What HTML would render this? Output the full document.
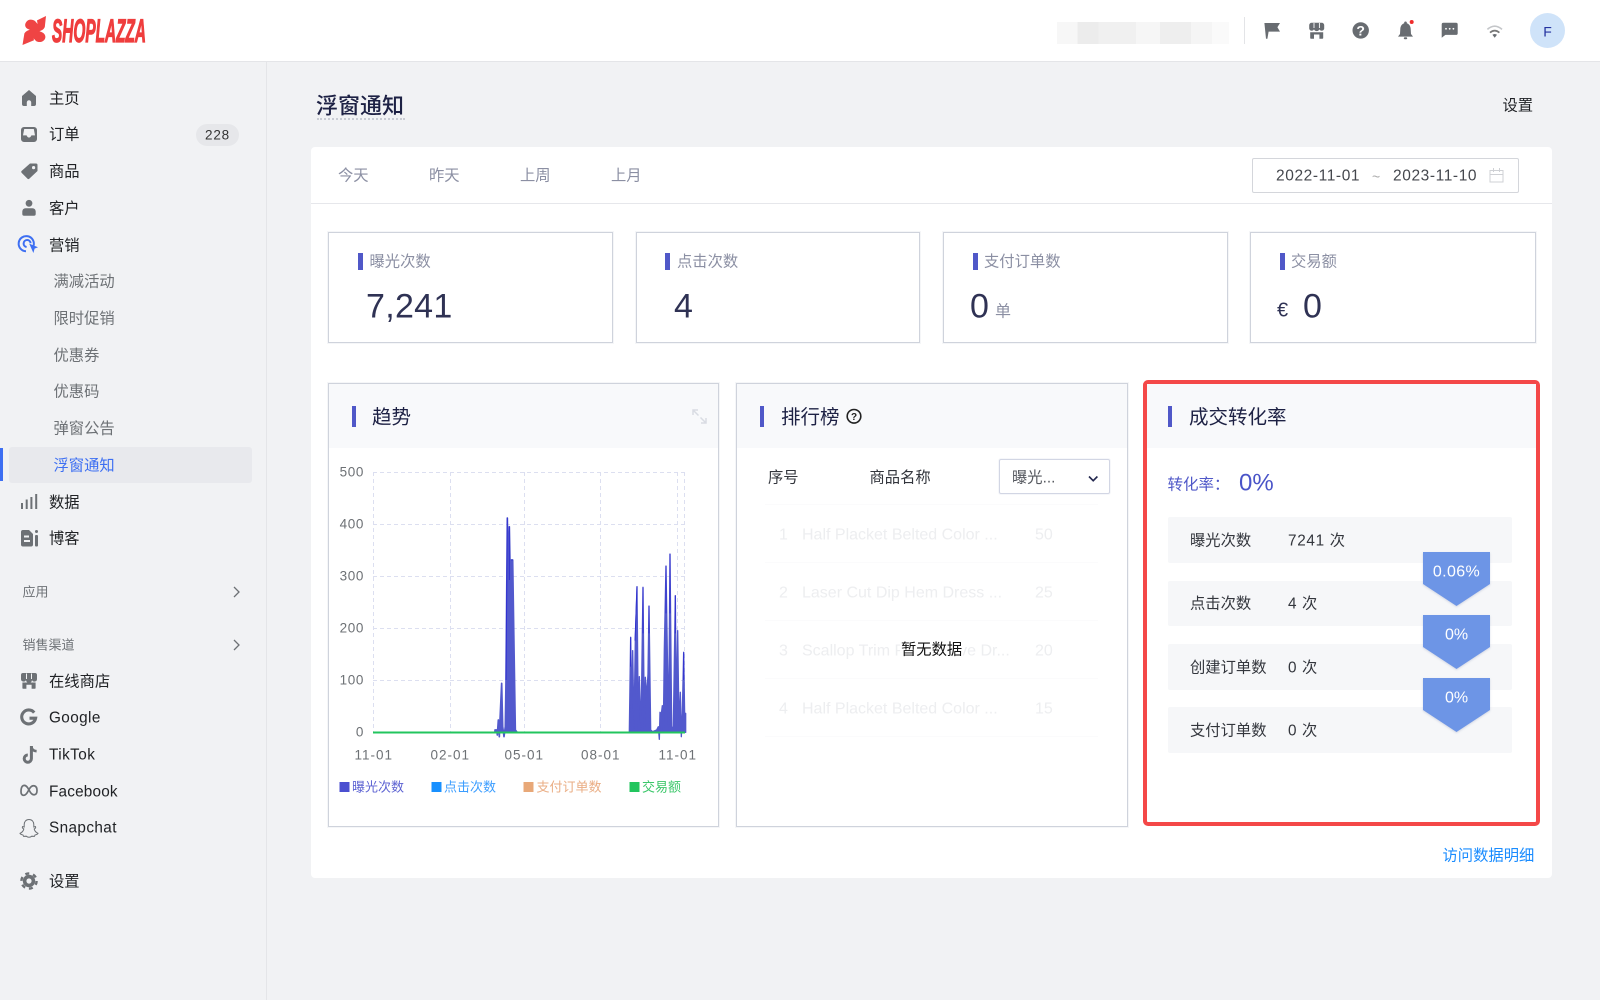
<!DOCTYPE html>
<html lang="zh"><head><meta charset="utf-8"><title>浮窗通知</title>
<style>
*{box-sizing:border-box;margin:0;padding:0}
html,body{width:1600px;height:1000px;overflow:hidden;background:#f1f2f4;font-family:"Liberation Sans","Noto Sans CJK SC",sans-serif;color:#1f2125}
.b{position:absolute}
.t{position:absolute;white-space:nowrap;transform:translateY(calc(-50% + 1.4px));line-height:20px;font-size:15.3px}
.nav{color:#202225}.sub{color:#6d7175}.lab{color:#8b8fa3}
.box{position:absolute;border:1px solid #cfd3dc;background:#fff;box-shadow:0 0 0 1px rgba(207,211,220,.2)}
.bar{position:absolute;background:#5058c8}
.ph{position:absolute;background:#f8f9fb}
.r{position:absolute;left:1168px;width:344px;background:#f6f7f9;border-radius:2px}
.ghost{color:#edeef0;font-size:16px}
.line{position:absolute;left:765px;width:333px;height:1px;background:#fbfbfc}
.num{color:#2f3254;font-size:34px;line-height:40px}
</style></head><body>
<div class="b" style="left:0;top:0;width:1600px;height:62px;background:#fff;border-bottom:1px solid #e4e5e8"></div>
<div class="b" style="left:266px;top:62px;width:1px;height:938px;background:#e4e5e8"></div>
<div class="b" style="left:9px;top:447px;width:243px;height:36px;background:#e8e9ed;border-radius:3px"></div>
<div class="b" style="left:0;top:448px;width:3px;height:33px;background:#3d6ff2"></div>
<div class="b" style="left:196px;top:124px;width:43px;height:22px;border-radius:11px;background:#e6e7ea"></div>
<div class="b" style="left:1057px;top:22px;width:172px;height:22px;background:linear-gradient(90deg,#f7f7f7 0 12%,#ececec 12% 24%,#f0f0f0 24% 46%,#f6f6f6 46% 60%,#eeeeee 60% 78%,#f5f5f5 78% 90%,#fafafa 90%)"></div>
<div class="b" style="left:1244px;top:17px;width:1px;height:27px;background:#e3e4e7"></div>
<div class="b" style="left:1530px;top:13px;width:35px;height:35px;border-radius:50%;background:#cfe3f9"></div>
<div class="b" style="left:311px;top:147px;width:1241px;height:731px;background:#fff;border-radius:4px"></div>
<div class="b" style="left:311px;top:203px;width:1241px;height:1px;background:#e6e7eb"></div>
<div class="b" style="left:1252px;top:158px;width:267px;height:35px;border:1px solid #d4d6db;border-radius:2px;background:#fff"></div>
<div class="box" style="left:328px;top:232px;width:285px;height:111px"></div>
<div class="box" style="left:636px;top:232px;width:284px;height:111px"></div>
<div class="box" style="left:943px;top:232px;width:285px;height:111px"></div>
<div class="box" style="left:1250px;top:232px;width:286px;height:111px"></div>
<div class="bar" style="left:358px;top:253px;width:5px;height:17px"></div>
<div class="bar" style="left:665px;top:253px;width:5px;height:17px"></div>
<div class="bar" style="left:973px;top:253px;width:5px;height:17px"></div>
<div class="bar" style="left:1280px;top:253px;width:5px;height:17px"></div>
<div class="box" style="left:328px;top:383px;width:391px;height:444px"></div>
<div class="ph" style="left:329px;top:384px;width:389px;height:64px"></div>
<div class="bar" style="left:352px;top:406px;width:4px;height:21px"></div>
<div class="box" style="left:736px;top:383px;width:392px;height:444px"></div>
<div class="ph" style="left:737px;top:384px;width:390px;height:64px"></div>
<div class="bar" style="left:760px;top:406px;width:4px;height:21px"></div>
<div class="b" style="left:1143px;top:380px;width:397px;height:446px;border:4px solid #f44848;border-radius:5px;background:#fff"></div>
<div class="ph" style="left:1147px;top:384px;width:389px;height:64px"></div>
<div class="bar" style="left:1168px;top:406px;width:4px;height:21px"></div>
<div class="r" style="top:517px;height:46px"></div>
<div class="r" style="top:581px;height:45px"></div>
<div class="r" style="top:644px;height:46px"></div>
<div class="r" style="top:707px;height:46px"></div>
<div class="line" style="top:504px"></div><div class="line" style="top:562px"></div><div class="line" style="top:620px"></div><div class="line" style="top:678px"></div><div class="line" style="top:736px"></div>
<div class="b" style="left:999px;top:459px;width:111px;height:35px;border:1px solid #d2d6e4;border-radius:2px;background:#fff;box-shadow:0 0 0 1px rgba(210,214,228,.2)"></div>

<svg class="b" style="left:0;top:0" width="1600" height="1000" viewBox="0 0 1600 1000" xmlns="http://www.w3.org/2000/svg">
<!-- logo -->
<path fill="#ef4444" d="M46 16L44.8 27C43.5 30 41 30.5 39.5 31.2C43.5 32.2 46.2 35 45.2 38.2C44 42 39 43 36 41L33.6 38.4L34 40.2L22.5 45L24.4 33.4C26 31 28 30.4 30 29.6C25.6 29 24 25.4 26 22.4C28 19 32 19 35 21L37.6 24L37 20.4Z"/>
<path fill="#ef4444" d="M29 26L38 24L40 36L31 38Z"/>
<text x="52" y="42" font-family="Liberation Sans" font-weight="700" font-style="italic" font-size="32" fill="#ef3d3d" stroke="#ef3d3d" stroke-width="1.2" textLength="94" lengthAdjust="spacingAndGlyphs">SHOPLAZZA</text>
<g fill="#6d7175">
<path d="M29 90L36 96V104A2 2 0 0 1 34 106H31.2V102.4A2.2 2.2 0 0 0 26.8 102.4V106H24A2 2 0 0 1 22 104V96Z"/>
<path fill-rule="evenodd" d="M24 127H34A3 3 0 0 1 37 130V139A3 3 0 0 1 34 142H24A3 3 0 0 1 21 139V130A3 3 0 0 1 24 127ZM24.2 129H33.8L35 135.4H31.4C30.9 136.8 30 137.6 29 137.6S27.1 136.8 26.6 135.4H23Z"/>
<path fill-rule="evenodd" d="M30 163.5H36A1.5 1.5 0 0 1 37.5 165V171L29.5 178.5A1.5 1.5 0 0 1 27.3 178.5L21.8 173A1.5 1.5 0 0 1 21.8 170.8ZM33.6 166A1.6 1.6 0 1 0 33.6 169.2A1.6 1.6 0 1 0 33.6 166Z"/>
<circle cx="29" cy="203.3" r="3.4"/>
<path d="M25.5 208.2H32.5A3.2 3.2 0 0 1 35.7 211.4V214A1.8 1.8 0 0 1 33.9 215.8H24.1A1.8 1.8 0 0 1 22.3 214V211.4A3.2 3.2 0 0 1 25.5 208.2Z"/>
<rect x="21" y="503" width="2" height="6"/><rect x="25.7" y="499.5" width="2" height="9.5"/><rect x="30.4" y="497" width="2" height="12"/><rect x="35.2" y="494" width="2" height="15"/>
<path fill-rule="evenodd" d="M23 530H29L33 534V544.5A2 2 0 0 1 31 546.5H23A2 2 0 0 1 21 544.5V532A2 2 0 0 1 23 530ZM24 535.5V537.5H29V535.5ZM24 540V542H30V540Z"/>
<circle cx="36.5" cy="531.5" r="1.5"/><rect x="35" y="535" width="3" height="11.5" rx="1"/>
<path d="M23 673H35A2 2 0 0 1 37 675V679A2.6 2.6 0 0 1 32 680A3 3 0 0 1 26 680A2.6 2.6 0 0 1 21 679V675A2 2 0 0 1 23 673Z"/>
<path d="M22.4 682.5H35.6V688A.8.8 0 0 1 34.8 688.8H31.6V684.8H26.4V688.8H23.2A.8.8 0 0 1 22.4 688Z"/>
<g><circle cx="29" cy="881" r="6.2"/><circle cx="29" cy="881" r="7.6" fill="none" stroke="#6d7175" stroke-width="2.4" stroke-dasharray="4 3.96"/><circle cx="29" cy="881" r="2.6" fill="#f1f2f4"/></g>
</g>
<path stroke="#f1f2f4" stroke-width="1" d="M26.5 673.5V679M31.5 673.5V679"/>
<g fill="none" stroke="#6d7175">
<path stroke-width="3.1" d="M34.2 712.6A7 7 0 1 0 35.6 718.2H29.5"/>
<path stroke-width="3" d="M31.4 746V758.6A3.6 3.6 0 1 1 27.8 755"/>
<path stroke-width="2.6" d="M31.4 746.5C31.7 749.3 33.6 751 36.6 751.2"/>
<path stroke-width="1.7" d="M21 791.5C21 784.5 25 784 27.5 787.5L30.5 792.5C33 796 37 795.5 37 790.5C37 785 32.5 784.5 30 788L27 793C24.5 796.5 21 796 21 791.5Z"/>
<path stroke-width="1" d="M29 819.5C32 819.5 33.8 821.7 33.8 824.5V827L35.5 826.6C36 827.5 35.5 828.3 34.2 829C34.6 831 36 832.5 38 833.3C37.6 834.3 36.4 834.7 35 835L34.4 836.4L31.8 836.2C30 837.6 28 837.6 26.2 836.2L23.6 836.4L23 835C21.6 834.7 20.4 834.3 20 833.3C22 832.5 23.4 831 23.8 829C22.5 828.3 22 827.5 22.5 826.6L24.2 827V824.5C24.2 821.7 26 819.5 29 819.5Z"/>
<path stroke-width="1.3" d="M234 587L239 592L234 597M234 640L239 645L234 650"/>
</g>
<path fill="#3d6ff2" d="M29.2 243.6L38 247.2L34.6 248.6L33.4 253Z"/>
<g fill="none" stroke="#3d6ff2" stroke-width="2"><path d="M33.5 246A7.6 7.6 0 1 0 26 251.3"/><path d="M30.6 243.2A3.5 3.5 0 1 0 26.6 247"/></g>
<!-- top icons -->
<g fill="#686c71">
<path d="M1264.4 23H1280L1277.4 27.2L1280 31.6H1268.6L1267.4 38.8H1266Z"/>
<path d="M1311.6 22.8H1321.8A2.4 2.4 0 0 1 1324.2 25.2V28.6A2.6 2.6 0 0 1 1319.4 29.4A3 3 0 0 1 1314 29.4A2.6 2.6 0 0 1 1309.2 28.6V25.2A2.4 2.4 0 0 1 1311.6 22.8Z"/>
<path d="M1310.2 32.2H1323.2V38A.7.7 0 0 1 1322.5 38.7H1319.4V34.5H1314V38.7H1310.9A.7.7 0 0 1 1310.2 38Z"/>
<circle cx="1360.7" cy="30.4" r="8.2"/>
<path d="M1405.5 21.5A1.3 1.3 0 0 1 1406.8 23.2C1409.3 24 1410.6 26.2 1410.7 29L1411 34L1413 36.6H1398L1400 34L1400.3 29C1400.4 26.2 1401.7 24 1404.2 23.2A1.3 1.3 0 0 1 1405.5 21.5Z"/><rect x="1403.8" y="37.2" width="3.4" height="2" rx="1"/>
<path d="M1443.4 22.8H1456A1.7 1.7 0 0 1 1457.7 24.5V33.2A1.7 1.7 0 0 1 1456 34.9H1445.4L1441.7 37.8V24.5A1.7 1.7 0 0 1 1443.4 22.8Z"/>
<path d="M1494.7 37.8L1492.4 34.8Q1494.7 33.2 1497 34.8Z"/>
</g>
<path stroke="#fff" stroke-width=".9" d="M1314 23V28M1319.4 23V28"/>
<text x="1360.7" y="35.6" text-anchor="middle" font-family="Liberation Sans" font-weight="700" font-size="14" fill="#fff">?</text>
<circle cx="1446" cy="28.8" r=".9" fill="#fff"/><circle cx="1449.7" cy="28.8" r=".9" fill="#fff"/><circle cx="1453.4" cy="28.8" r=".9" fill="#fff"/>
<circle cx="1411.7" cy="22" r="2" fill="#ef2b2b"/>
<path fill="none" stroke="#c4c6c9" stroke-width="1.6" d="M1487.4 29.4Q1494.7 23 1502 29.4"/>
<path fill="none" stroke="#777" stroke-width="1.7" d="M1490 32.6Q1494.7 28.6 1499.4 32.6"/>
<!-- date icon -->
<path fill="none" stroke="#cfd1d5" stroke-width="1" d="M1490 170.5H1503V182H1490ZM1490 174.5H1503M1493.5 168V172M1499.5 168V172"/>
<!-- expand -->
<path fill="none" stroke="#d9dce3" stroke-width="1.5" d="M693 415V410H698M693 410L698.5 415.5M706 418V423H701M706 423L700.5 417.5"/>
<!-- help -->
<circle cx="854" cy="416.3" r="6.8" fill="none" stroke="#222" stroke-width="1.6"/>
<text x="854" y="420.2" text-anchor="middle" font-family="Liberation Sans" font-weight="700" font-size="10" fill="#222">?</text>
<path fill="none" stroke="#23284f" stroke-width="1.6" d="M1089 476.5L1093.2 480.7L1097.4 476.5"/>
<!-- chart grid -->
<g stroke="#dcdff0" stroke-width="1" stroke-dasharray="4 3" fill="none">
<path d="M373 472.5H685M373 524.5H685M373 576.5H685M373 628.5H685M373 680.5H685"/>
<path d="M373.5 472V733M450.5 472V733M524.5 472V733M600.5 472V733M677.5 472V733M684.5 472V733"/>
</g>
<g transform="translate(320 380) scale(.33333)" stroke-linejoin="round">
<path fill="#5259cd" stroke="#5259cd" stroke-width="5" d="M525 1055V1050L530 1050L532 1065L535 1020L538 1070L540 1020L545 910L548 1040L552 1070L556 1040L558 900L562 414L565 600L568 440L571 600L574 540L578 540L582 800L586 1050L590 1055Z"/>
<path fill="#5259cd" stroke="#5259cd" stroke-width="4" d="M928 1055L932 772L935 1000L938 812L942 1045L946 782L951 620L955 1055L958 890L963 1055L969 622L973 1055L976 892L980 950L984 882L987 678L992 1050L998 1055L1010 1050L1015 1040L1018 1078L1020 997L1024 1002L1027 977L1030 1050L1033 807L1038 558L1042 820L1046 1040L1050 522L1055 1040L1060 1045L1066 647L1069 1000L1073 752L1077 1040L1081 937L1084 1070L1087 1000L1091 817L1094 1010L1097 1000V1057Z"/>
<path fill="none" stroke="#2f2fd0" stroke-width="3" d="M558 900L562 414M568 440V600M574 540H578M945 782L951 620M969 622V760M987 678V760M1038 558V700M1050 522V700M1066 647V760M1091 817V900M932 772V860"/>
</g>
<rect x="373" y="731.5" width="312" height="2" fill="#22c55e"/>
<rect x="339.5" y="782" width="10" height="10" fill="#4b4fd0"/>
<rect x="431.5" y="782" width="10" height="10" fill="#1890ff"/>
<rect x="523.5" y="782" width="10" height="10" fill="#e8a878"/>
<rect x="629.5" y="782" width="10" height="10" fill="#22c55e"/>
<!-- funnel arrows -->
<g fill="#6d95e6" style="filter:drop-shadow(0 1px 1px rgba(60,80,140,.2))">
<path d="M1423 552H1490V584L1456.5 606L1423 584Z"/>
<path d="M1423 615H1490V647L1456.5 669L1423 647Z"/>
<path d="M1423 678H1490V710L1456.5 732L1423 710Z"/>
</g>
</svg>

<div class="t nav" style="left:49px;top:98px">主页</div>
<div class="t nav" style="left:49px;top:134px">订单</div>
<div class="t" style="left:196px;width:43px;text-align:center;top:134px;font-size:13.5px;letter-spacing:.8px;color:#333">228</div>
<div class="t nav" style="left:49px;top:171px">商品</div>
<div class="t nav" style="left:49px;top:207.5px">客户</div>
<div class="t nav" style="left:49px;top:244.5px">营销</div>
<div class="t sub" style="left:53.5px;top:281px">满减活动</div>
<div class="t sub" style="left:53.5px;top:318px">限时促销</div>
<div class="t sub" style="left:53.5px;top:354.5px">优惠券</div>
<div class="t sub" style="left:53.5px;top:391px">优惠码</div>
<div class="t sub" style="left:53.5px;top:428px">弹窗公告</div>
<div class="t" style="left:53.5px;top:465px;color:#3d6ff2">浮窗通知</div>
<div class="t nav" style="left:49px;top:501.5px">数据</div>
<div class="t nav" style="left:49px;top:538px">博客</div>
<div class="t sub" style="left:22.5px;top:591px;font-size:13px">应用</div>
<div class="t sub" style="left:22.5px;top:644px;font-size:13px">销售渠道</div>
<div class="t nav" style="left:49px;top:681px">在线商店</div>
<div class="t nav" style="left:49px;top:717px;letter-spacing:.4px">Google</div>
<div class="t nav" style="left:49px;top:753.5px;letter-spacing:.45px">TikTok</div>
<div class="t nav" style="left:49px;top:790.5px;letter-spacing:.2px">Facebook</div>
<div class="t nav" style="left:49px;top:827px;letter-spacing:.4px">Snapchat</div>
<div class="t nav" style="left:49px;top:881px">设置</div>
<div class="t" style="left:1530px;width:35px;text-align:center;top:30px;font-size:14px;color:#2433a0">F</div>

<div class="t" style="left:316px;top:105px;font-size:22px;font-weight:500;color:#1d2144;line-height:26px">浮窗通知</div>
<div class="b" style="left:317px;top:118px;width:88px;border-top:2px dotted #c9ccd4"></div>
<div class="t" style="left:1502.5px;top:105px">设置</div>
<div class="t lab" style="left:338px;top:175px">今天</div>
<div class="t lab" style="left:429px;top:175px">昨天</div>
<div class="t lab" style="left:520px;top:175px">上周</div>
<div class="t lab" style="left:611px;top:175px">上月</div>
<div class="t" style="left:1276px;top:175px;font-size:15.5px;letter-spacing:.6px;color:#44474d">2022-11-01</div>
<div class="t" style="left:1372px;top:175px;font-size:14px;color:#aaa">~</div>
<div class="t" style="left:1393px;top:175px;font-size:15.5px;letter-spacing:.6px;color:#44474d">2023-11-10</div>

<div class="t lab" style="left:369.5px;top:260.5px">曝光次数</div>
<div class="t lab" style="left:677px;top:260.5px">点击次数</div>
<div class="t lab" style="left:984px;top:260.5px">支付订单数</div>
<div class="t lab" style="left:1291px;top:260.5px">交易额</div>
<div class="t num" style="left:366px;top:305px;letter-spacing:.3px">7,241</div>
<div class="t num" style="left:674px;top:305px">4</div>
<div class="t num" style="left:970px;top:305px">0</div>
<div class="t lab" style="left:995px;top:310.5px;font-size:16px">单</div>
<div class="t" style="left:1277px;top:309px;font-size:20px;color:#2f3254">€</div>
<div class="t num" style="left:1303px;top:305px">0</div>

<div class="t" style="left:372px;top:416px;font-size:19.5px;line-height:26px;color:#1d2144">趋势</div>
<div class="t" style="left:781px;top:416px;font-size:19.5px;line-height:26px;color:#1d2144">排行榜</div>
<div class="t" style="left:1189px;top:416px;font-size:19.5px;line-height:26px;color:#1d2144">成交转化率</div>

<div class="t sub" style="left:330px;width:34px;text-align:right;top:470.5px;font-size:13.5px;letter-spacing:.6px">500</div>
<div class="t sub" style="left:330px;width:34px;text-align:right;top:522.5px;font-size:13.5px;letter-spacing:.6px">400</div>
<div class="t sub" style="left:330px;width:34px;text-align:right;top:574.5px;font-size:13.5px;letter-spacing:.6px">300</div>
<div class="t sub" style="left:330px;width:34px;text-align:right;top:626.5px;font-size:13.5px;letter-spacing:.6px">200</div>
<div class="t sub" style="left:330px;width:34px;text-align:right;top:678.5px;font-size:13.5px;letter-spacing:.6px">100</div>
<div class="t sub" style="left:330px;width:34px;text-align:right;top:730.5px;font-size:13.5px;letter-spacing:.6px">0</div>
<div class="t sub" style="left:354.5px;top:753.5px;font-size:13.5px;letter-spacing:1px">11-01</div>
<div class="t sub" style="left:430.5px;top:753.5px;font-size:13.5px;letter-spacing:1px">02-01</div>
<div class="t sub" style="left:504.5px;top:753.5px;font-size:13.5px;letter-spacing:1px">05-01</div>
<div class="t sub" style="left:581px;top:753.5px;font-size:13.5px;letter-spacing:1px">08-01</div>
<div class="t sub" style="left:658.5px;top:753.5px;font-size:13.5px;letter-spacing:1px">11-01</div>
<div class="t" style="left:352px;top:786px;font-size:13px;color:#5c62d2">曝光次数</div>
<div class="t" style="left:444px;top:786px;font-size:13px;color:#3b9dff">点击次数</div>
<div class="t" style="left:536.5px;top:786px;font-size:13px;color:#eaae85">支付订单数</div>
<div class="t" style="left:642px;top:786px;font-size:13px;color:#3cc76a">交易额</div>

<div class="t" style="left:768px;top:476.5px;color:#33363d">序号</div>
<div class="t" style="left:869.5px;top:476.5px;color:#33363d">商品名称</div>
<div class="t" style="left:1012px;top:476.5px;color:#55585f">曝光...</div>
<div class="t ghost" style="left:779px;top:533.5px">1</div><div class="t ghost" style="left:802px;top:533.5px">Half Placket Belted Color ...</div><div class="t ghost" style="left:1035px;top:533.5px">50</div>
<div class="t ghost" style="left:779px;top:591.5px">2</div><div class="t ghost" style="left:802px;top:591.5px">Laser Cut Dip Hem Dress ...</div><div class="t ghost" style="left:1035px;top:591.5px">25</div>
<div class="t ghost" style="left:779px;top:649.5px">3</div><div class="t ghost" style="left:802px;top:649.5px">Scallop Trim Puff Sleeve Dr...</div><div class="t ghost" style="left:1035px;top:649.5px">20</div>
<div class="t ghost" style="left:779px;top:707.5px">4</div><div class="t ghost" style="left:802px;top:707.5px">Half Placket Belted Color ...</div><div class="t ghost" style="left:1035px;top:707.5px">15</div>
<div class="b" style="left:900px;top:640px;width:63px;height:22px;background:rgba(255,255,255,.9)"></div>
<div class="t" style="left:901px;top:649px;color:#111">暂无数据</div>

<div class="t" style="left:1167.5px;top:483.5px;font-size:15.5px;color:#5058c8">转化率：</div>
<div class="t" style="left:1239px;top:481.5px;font-size:24px;line-height:30px;color:#4a54c8">0%</div>
<div class="t" style="left:1190px;top:540px;color:#33363d">曝光次数</div><div class="t" style="left:1288px;top:540px;color:#33363d;letter-spacing:.7px">7241 次</div>
<div class="t" style="left:1190px;top:603px;color:#33363d">点击次数</div><div class="t" style="left:1288px;top:603px;color:#33363d;letter-spacing:.6px">4 次</div>
<div class="t" style="left:1190px;top:667px;color:#33363d">创建订单数</div><div class="t" style="left:1288px;top:667px;color:#33363d;letter-spacing:.6px">0 次</div>
<div class="t" style="left:1190px;top:730px;color:#33363d">支付订单数</div><div class="t" style="left:1288px;top:730px;color:#33363d;letter-spacing:.6px">0 次</div>
<div class="t" style="left:1423px;width:67px;text-align:center;top:570.5px;font-size:16px;letter-spacing:.4px;color:#fff">0.06%</div>
<div class="t" style="left:1423px;width:67px;text-align:center;top:633.5px;font-size:16px;color:#fff">0%</div>
<div class="t" style="left:1423px;width:67px;text-align:center;top:696.5px;font-size:16px;color:#fff">0%</div>
<div class="t" style="left:1442.5px;top:855px;color:#1a8cff">访问数据明细</div>
</body></html>
